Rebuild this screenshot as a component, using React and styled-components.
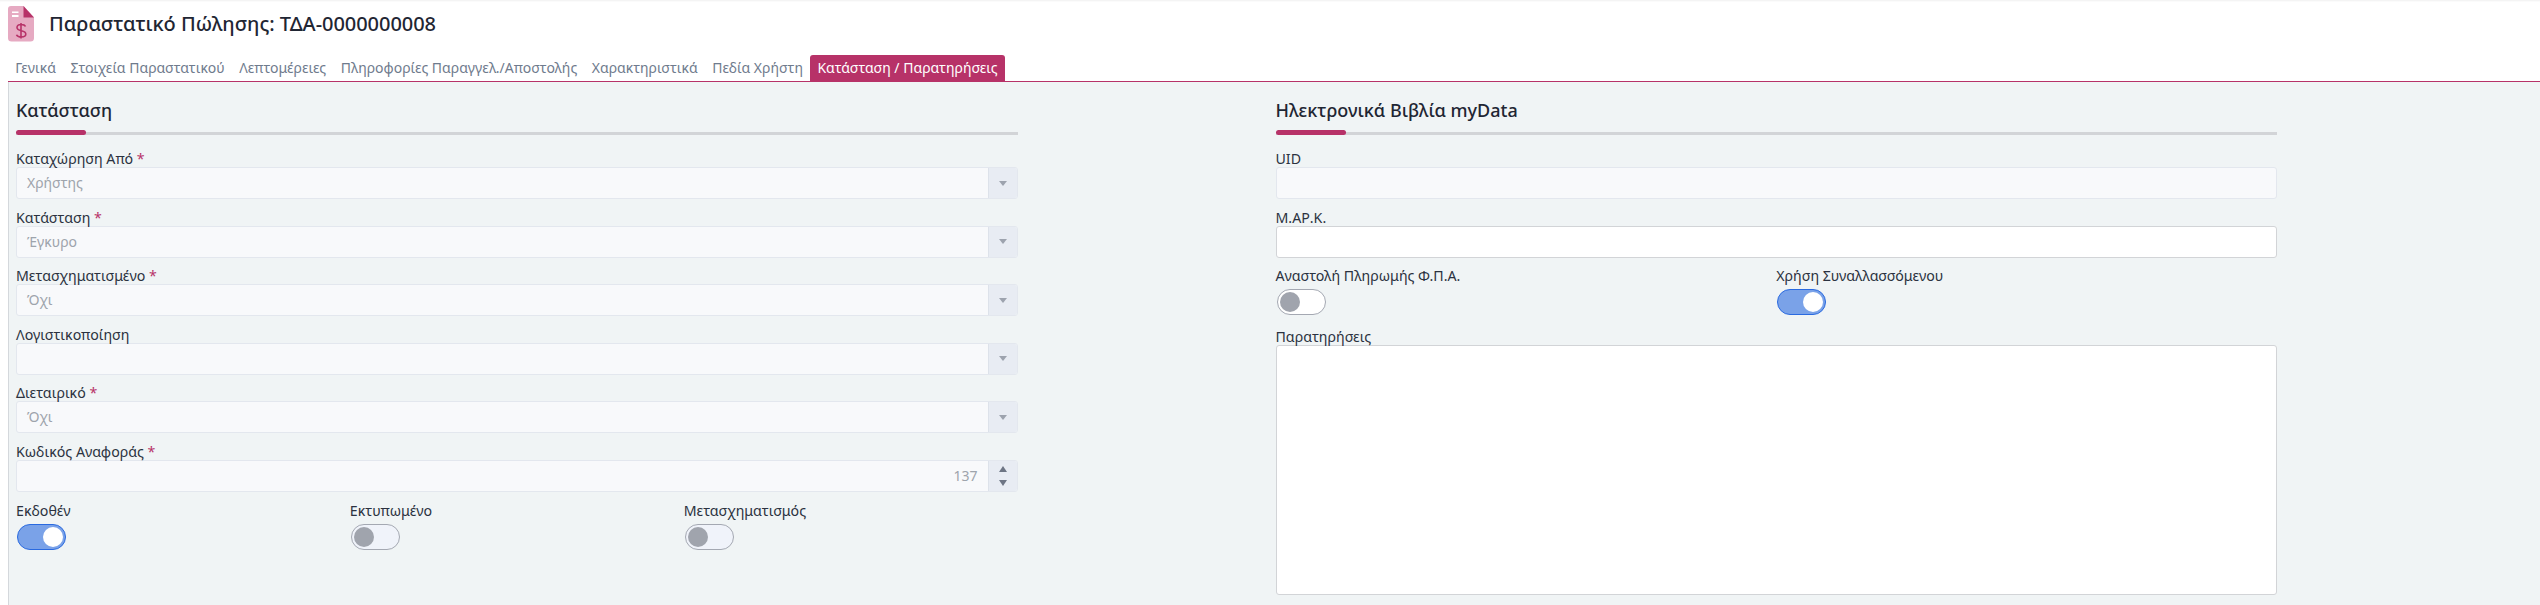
import React from "react";
import styled, { createGlobalStyle } from "styled-components";

const Global = createGlobalStyle`
  html, body { margin: 0; padding: 0; background: #fff; }
  body { font-family: "Noto Sans", "Open Sans", sans-serif; color: #2b3240; }
  #root { height: 605px; overflow: hidden; }
`;

const Page = styled.div`
  height: 605px;
  display: flex;
  flex-direction: column;
  box-shadow: inset 0 2px 2px -1px #f0f0f0;
`;
const Header = styled.header`
  display: flex;
  align-items: center;
  gap: 15px;
  height: 35px;
  padding: 6px 0 0 8px;
`;
const Title = styled.h1`
  margin: 0;
  font-size: 20px;
  line-height: 35px;
  font-weight: 500;
  letter-spacing: -0.04px;
  color: #1f2633;
`;
const Tabs = styled.nav`
  display: flex;
  align-items: flex-end;
  height: 26px;
  margin: 14px 0 0 8px;
  border-bottom: 1px solid #b73268;
  box-sizing: content-box;
`;
const Tab = styled.a`
  display: block;
  height: 26px;
  line-height: 26px;
  padding: 0 7.25px;
  font-size: 14px;
  white-space: nowrap;
  border-radius: 3px 3px 0 0;
  color: ${(p) => (p.$active ? "#fff" : "#6f7b8d")};
  background: ${(p) => (p.$active ? "#b73268" : "transparent")};
`;
const Panel = styled.main`
  flex: 1;
  margin-left: 8px;
  background: #f0f4f5;
  border-left: 1px solid #d4d8dc;
  display: grid;
  grid-template-columns: 1259.5px 1259.5px;
  padding-left: 7px;
`;
const Column = styled.section`
  width: 1001.5px;
  padding-top: 14px;
`;
const SectionTitle = styled.h2`
  margin: 0;
  font-size: 18px;
  line-height: 28px;
  font-weight: 500;
  color: #1f2633;
`;
const Rule = styled.div`
  position: relative;
  height: 3px;
  margin: 8px 0 15px;
  background: #d2d4d7;
  &::before {
    content: "";
    position: absolute;
    left: 0;
    top: -2px;
    width: 70px;
    height: 5px;
    border-radius: 3px;
    background: #b73268;
  }
`;
const Field = styled.div`
  margin-bottom: 9.6px;
`;
const Label = styled.label`
  display: block;
  font-size: 14.2px;
  line-height: 17px;
  color: #2b3240;
`;
const Req = styled.span`
  color: #b73268;
`;
const Control = styled.div`
  display: flex;
  height: 32px;
  box-sizing: border-box;
  border: 1px solid ${(p) => (p.$enabled ? "#d2d4d7" : "#e3e7ee")};
  border-radius: 3px;
  background: ${(p) => (p.$enabled ? "#fff" : "#f8f9fb")};
  overflow: hidden;
`;
const Value = styled.div`
  flex: 1;
  padding: 0 10px;
  line-height: 30px;
  font-size: 14px;
  color: #9ea4ac;
  text-align: ${(p) => (p.$right ? "right" : "left")};
`;
const Addon = styled.div`
  width: 28px;
  background: #e8ecf3;
  border-left: 1px solid #dde2ea;
  display: flex;
  flex-direction: column;
  align-items: center;
  justify-content: center;
  gap: 8px;
`;
const Arrow = styled.i`
  display: block;
  width: 0;
  height: 0;
  border-left: 4px solid transparent;
  border-right: 4px solid transparent;
  ${(p) =>
    p.$up
      ? `border-bottom: 6px solid #6d7584;`
      : `border-top: ${p.$dark ? 6 : 5}px solid ${p.$dark ? "#6d7584" : "#9da3ae"};`}
`;
const ToggleRow = styled.div`
  display: grid;
  grid-template-columns: repeat(${(p) => p.$cols}, 1fr);
`;
const ToggleCell = styled.div`
  min-height: 61px;
`;
const Track = styled.div`
  width: 49px;
  height: 26px;
  box-sizing: border-box;
  margin: 5px 0 0 1px;
  padding: 2px;
  display: flex;
  justify-content: ${(p) => (p.$on ? "flex-end" : "flex-start")};
  border-radius: 13px;
  border: 1px solid ${(p) => (p.$on ? "#2a6ae0" : "#a4a8b2")};
  background: ${(p) => (p.$on ? "#7aa2e8" : p.$white ? "#fff" : "#f0f3fa")};
`;
const Knob = styled.div`
  width: 20px;
  height: 20px;
  border-radius: 50%;
  background: ${(p) => (p.$on ? "#fff" : "#a0a4ad")};
`;
const Textarea = styled.div`
  height: 250px;
  box-sizing: border-box;
  background: #fff;
  border: 1px solid #d2d4d7;
  border-radius: 3px;
`;

const DocIcon = () => (
  <svg width="26" height="36" viewBox="0 0 26 36">
    <path d="M3 0H15.5L26 11.5V32a3.5 3.5 0 0 1-3.5 3.5H3.5A3.5 3.5 0 0 1 0 32V3a3 3 0 0 1 3-3Z" fill="#e6aac2" />
    <path d="M15.5 0 26 11.5H15.5Z" fill="#b73268" />
    <rect x="4" y="5.5" width="6.5" height="1.5" fill="#fff" />
    <rect x="4" y="9" width="6.5" height="2" fill="#fff" />
    <path d="M17.5 20.5c-.6-1.4-2-2-4.4-2-2.6 0-4.1 1.1-4.1 3 0 4.4 8.8 2.1 8.8 6.5 0 1.9-1.7 3-4.5 3-2.6 0-4.2-.8-4.8-2.3M13 17v15.5" fill="none" stroke="#b73268" strokeWidth="1.6" />
  </svg>
);

const Select = ({ label, req, value }) => (
  <Field>
    <Label>
      {label} {req && <Req>*</Req>}
    </Label>
    <Control>
      <Value>{value}</Value>
      <Addon>
        <Arrow />
      </Addon>
    </Control>
  </Field>
);

const Toggle = ({ label, on, white }) => (
  <ToggleCell>
    <Label>{label}</Label>
    <Track $on={on} $white={white}>
      <Knob $on={on} />
    </Track>
  </ToggleCell>
);

const tabs = [
  "Γενικά",
  "Στοιχεία Παραστατικού",
  "Λεπτομέρειες",
  "Πληροφορίες Παραγγελ./Αποστολής",
  "Χαρακτηριστικά",
  "Πεδία Χρήστη",
];

export default function App() {
  return (
    <Page>
      <Global />
      <Header>
        <DocIcon />
        <Title>Παραστατικό Πώλησης: ΤΔΑ-0000000008</Title>
      </Header>
      <Tabs>
        {tabs.map((t) => (
          <Tab key={t}>{t}</Tab>
        ))}
        <Tab $active>Κατάσταση / Παρατηρήσεις</Tab>
      </Tabs>
      <Panel>
        <Column>
          <SectionTitle>Κατάσταση</SectionTitle>
          <Rule />
          <Select label="Καταχώρηση Από" req value="Χρήστης" />
          <Select label="Κατάσταση" req value="Έγκυρο" />
          <Select label="Μετασχηματισμένο" req value="Όχι" />
          <Select label="Λογιστικοποίηση" value="" />
          <Select label="Διεταιρικό" req value="Όχι" />
          <Field>
            <Label>
              Κωδικός Αναφοράς <Req>*</Req>
            </Label>
            <Control>
              <Value $right>137</Value>
              <Addon>
                <Arrow $up />
                <Arrow $dark />
              </Addon>
            </Control>
          </Field>
          <ToggleRow $cols={3}>
            <Toggle label="Εκδοθέν" on />
            <Toggle label="Εκτυπωμένο" />
            <Toggle label="Μετασχηματισμός" />
          </ToggleRow>
        </Column>
        <Column>
          <SectionTitle>Ηλεκτρονικά Βιβλία myData</SectionTitle>
          <Rule />
          <Field>
            <Label>UID</Label>
            <Control />
          </Field>
          <Field>
            <Label>Μ.ΑΡ.Κ.</Label>
            <Control $enabled />
          </Field>
          <ToggleRow $cols={2}>
            <Toggle label="Αναστολή Πληρωμής Φ.Π.Α." white />
            <Toggle label="Χρήση Συναλλασσόμενου" on />
          </ToggleRow>
          <Label>Παρατηρήσεις</Label>
          <Textarea />
        </Column>
      </Panel>
    </Page>
  );
}
